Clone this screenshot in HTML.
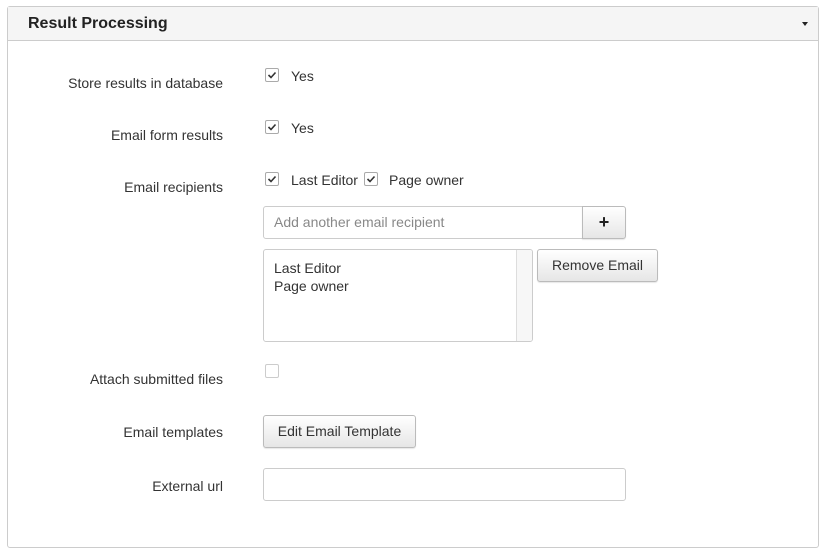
<!DOCTYPE html><html><head><style>
body{margin:0;width:826px;height:556px;background:#fff;font-family:"Liberation Sans",sans-serif;font-size:14px;color:#333;position:relative;overflow:hidden}
.a{position:absolute}
.panel{left:7px;top:6px;width:810px;height:540px;border:1px solid #ccc;border-radius:3px}
.hd{left:8px;top:7px;width:810px;height:33px;background:#f5f5f5;border-bottom:1px solid #ccc}
.lbl{right:603px;text-align:right;white-space:nowrap}
.cb{width:12px;height:12px;border:1px solid #aaa;border-radius:2px;background:#fff}
.cb svg{position:absolute;left:1px;top:1px}
.btn{border:1px solid #bbb;border-radius:3px;background:linear-gradient(#fff,#e6e6e6);box-shadow:0 1px 1px rgba(0,0,0,.1);text-align:center;box-sizing:border-box}
.inp{border:1px solid #ccc;border-radius:3px;background:#fff;box-sizing:border-box}
</style></head><body>
<div class="a panel"></div>
<div class="a hd"></div>
<div class="a" style="left:28px;top:15px;font-weight:bold;font-size:16px;color:#222">Result Processing</div>
<div class="a" style="left:802px;top:22px;width:0;height:0;border-left:3.5px solid transparent;border-right:3.5px solid transparent;border-top:4px solid #222"></div>

<div class="a lbl" style="top:75px">Store results in database</div>
<div class="a cb" style="left:265px;top:68px"><svg width="10" height="10"><path d="M1.5 5 L4 7.5 L8.5 2.5" stroke="#333" stroke-width="1.6" fill="none"/></svg></div>
<div class="a" style="left:291px;top:68px">Yes</div>

<div class="a lbl" style="top:127px">Email form results</div>
<div class="a cb" style="left:265px;top:120px"><svg width="10" height="10"><path d="M1.5 5 L4 7.5 L8.5 2.5" stroke="#333" stroke-width="1.6" fill="none"/></svg></div>
<div class="a" style="left:291px;top:120px">Yes</div>

<div class="a lbl" style="top:179px">Email recipients</div>
<div class="a cb" style="left:265px;top:172px"><svg width="10" height="10"><path d="M1.5 5 L4 7.5 L8.5 2.5" stroke="#333" stroke-width="1.6" fill="none"/></svg></div>
<div class="a" style="left:291px;top:172px">Last Editor</div>
<div class="a cb" style="left:364px;top:172px"><svg width="10" height="10"><path d="M1.5 5 L4 7.5 L8.5 2.5" stroke="#333" stroke-width="1.6" fill="none"/></svg></div>
<div class="a" style="left:389px;top:172px">Page owner</div>

<div class="a inp" style="left:263px;top:206px;width:320px;height:33px;border-radius:3px 0 0 3px"></div>
<div class="a" style="left:274px;top:214px;color:#888">Add another email recipient</div>
<div class="a btn" style="left:582px;top:206px;width:44px;height:33px;border-radius:0 3px 3px 0;font-weight:bold;font-size:18px;line-height:30px;color:#222">+</div>

<div class="a inp" style="left:263px;top:249px;width:270px;height:93px;overflow:hidden"><div style="position:absolute;right:0;top:0;width:15px;height:91px;background:#f7f7f7;border-left:1px solid #ddd"></div></div>
<div class="a" style="left:274px;top:259px;line-height:18px">Last Editor<br>Page owner</div>
<div class="a btn" style="left:537px;top:249px;width:121px;height:33px;line-height:31px">Remove Email</div>

<div class="a lbl" style="top:371px">Attach submitted files</div>
<div class="a cb" style="left:265px;top:364px;border-color:#ccc"></div>

<div class="a lbl" style="top:424px">Email templates</div>
<div class="a btn" style="left:263px;top:415px;width:153px;height:33px;line-height:31px">Edit Email Template</div>

<div class="a lbl" style="top:478px">External url</div>
<div class="a inp" style="left:263px;top:468px;width:363px;height:33px"></div>
</body></html>
